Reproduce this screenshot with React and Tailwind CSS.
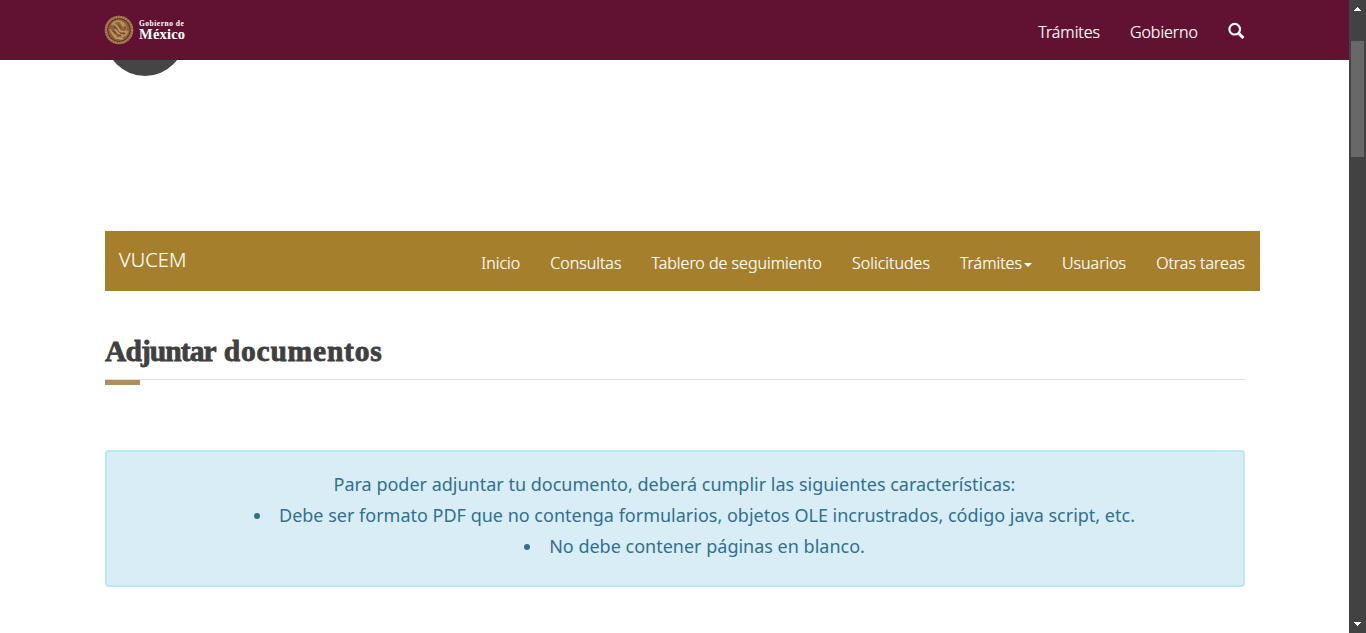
const topLinks = ['Trámites', 'Gobierno'];
const menu = ['Inicio', 'Consultas', 'Tablero de seguimiento', 'Solicitudes', 'Trámites', 'Usuarios', 'Otras tareas'];

function Seal() {
  return (
    <svg className="-ml-[1px] -mt-[1px] block h-[30px] w-[30px]" viewBox="0 0 30 30" fill="none">
      <circle cx="15" cy="15" r="13" stroke="#8a6440" strokeWidth="2.6" />
      <circle cx="15" cy="15" r="13" stroke="#ab854c" strokeWidth="2.4" strokeDasharray="1.4 1.1" />
      <circle cx="15" cy="15" r="10.9" fill="#8a603b" />
      <path d="M8 10c2-4 7-5 11-2 3 2 4 6 2 10M6 14c2 5 5 8 10 8 4 0 6-2 8-6" stroke="#b58f50" strokeWidth="1.8" />
      <path d="M9 8l4 3 3 5 5 1M11 14l3 4 5 2M8 18l4 5 7 1M17 8l3 4" stroke="#c29c58" strokeWidth="1.5" />
      <path d="M10 12l3 2M14 10l3 3M16 19l5-1M9 16l3 2M21 11l1 4M13 21h4" stroke="#6b2d30" strokeWidth="0.8" />
    </svg>
  );
}

function Header() {
  return (
    <header className="flex h-[60px] bg-[#611232] pl-[105px] pr-[104px]">
      <div className="flex h-[60px] items-center gap-[5px]">
        <Seal />
        <div className="flex flex-col font-['Liberation_Serif',serif] text-white">
          <span className="h-[8px] whitespace-nowrap text-[7.5px] font-bold leading-[8px] tracking-[0.5px]">Gobierno de</span>
          <span className="h-[12px] text-[14.5px] font-bold leading-[12px] tracking-[0.2px]">México</span>
        </div>
      </div>
      <nav className="ml-auto flex gap-[30px] pt-[21px]">
        {topLinks.map((t) => (
          <a key={t} className="whitespace-nowrap text-[16px] font-light leading-[22px] tracking-[-0.05px] text-white [-webkit-text-stroke:0.2px_#fff]">{t}</a>
        ))}
        <svg className="mt-[1px] h-[18px] w-[17px]" viewBox="0 0 17 18" fill="none" stroke="#fff">
          <circle cx="6.7" cy="7.2" r="5.3" strokeWidth="2.1" />
          <path d="M10.6 11.2l4.8 4.8" strokeWidth="3" />
        </svg>
      </nav>
    </header>
  );
}

function Scrollbar() {
  return (
    <aside className="flex w-[17px] shrink-0 flex-col bg-[#424242]">
      <div className="flex h-[41px] justify-center pt-[7px]">
        <svg className="h-[4px] w-[7px]" viewBox="0 0 7 4" shapeRendering="crispEdges"><path d="M3 0h1v1h1v1h1v1h1v1H0V3h1V2h1V1h1z" fill="#fff" /></svg>
      </div>
      <div className="ml-[2px] h-[116px] w-[13px] bg-[#686868]" />
      <div className="mt-auto flex h-[11px] justify-center">
        <svg className="h-[4px] w-[7px]" viewBox="0 0 7 4" shapeRendering="crispEdges"><path d="M0 0h7v1H6v1H5v1H4v1H3V3H2V2H1V1H0z" fill="#fff" /></svg>
      </div>
    </aside>
  );
}

export default function App() {
  return (
    <div className="flex h-[633px] w-[1366px] overflow-hidden bg-white font-['Noto_Sans',sans-serif]">
      <div className="flex w-[1349px] flex-col">
        <Header />
        <div className="h-[171px] pl-[105px]">
          <div className="h-[16px] w-[80px] overflow-hidden">
            <div className="-mt-[64px] h-[80px] w-[80px] rounded-full bg-[#454545]" />
          </div>
        </div>
        <nav className="ml-[105px] flex h-[60px] w-[1155px] bg-[#a57f2c] pl-[14px] pr-[15px] text-white">
          <a className="pt-[15px] text-[20px] font-light leading-[28px] tracking-[0.1px] [-webkit-text-stroke:0.15px_#fff]">VUCEM</a>
          <div className="ml-auto flex gap-[30px] pt-[21px]">
            {menu.map((t) => (
              <a key={t} className="flex whitespace-nowrap text-[16px] font-light leading-[22px] [-webkit-text-stroke:0.2px_#fff]">
                {t}
                {t === 'Trámites' && (
                  <svg className="ml-[2px] mt-[11px] h-[4px] w-[8px]" viewBox="0 0 8 4"><path d="M0 0h8L4 4z" fill="#fff" /></svg>
                )}
              </a>
            ))}
          </div>
        </nav>
        <main className="flex w-[1245px] flex-col pl-[105px]">
          <h1 className="mt-[40px] h-[48px] whitespace-nowrap font-['Liberation_Serif',serif] text-[29.5px] font-bold leading-[40px] text-[#404041] [-webkit-text-stroke:0.8px_#404041]">
            <span className="tracking-[-0.9px]">Adjuntar </span>
            <span className="ml-[2px] tracking-[0.8px]">documentos</span>
          </h1>
          <div className="h-[71px] border-t border-[#dddddd]">
            <div className="h-[5px] w-[35px] bg-[#b38e5d]" />
          </div>
          <section className="h-[137px] rounded-[4px] border-2 border-[#bce8f1] bg-[#d9edf7] pl-[15px] pr-[16px] pt-[17px] text-center text-[18px] leading-[31px] text-[#31708f]">
            <p>Para poder adjuntar tu documento, deberá cumplir las siguientes características:</p>
            <ul className="list-inside list-disc pl-[40px]">
              <li>Debe ser formato PDF que no contenga formularios, objetos OLE incrustrados, código java script, etc.</li>
              <li>No debe contener páginas en blanco.</li>
            </ul>
          </section>
        </main>
      </div>
      <Scrollbar />
    </div>
  );
}
